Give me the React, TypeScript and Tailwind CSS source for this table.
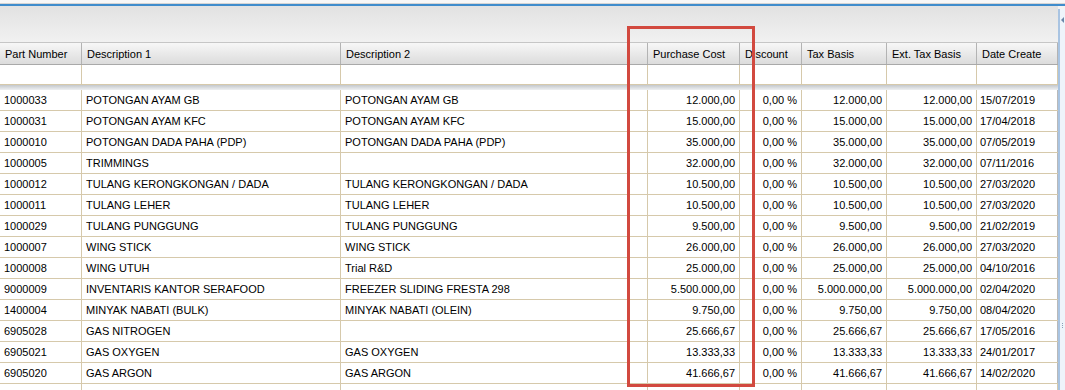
import React from 'react';

type Row = {
  part: string;
  desc1: string;
  desc2: string;
  cost: string;
  disc: string;
  tax: string;
  ext: string;
  date: string;
};

const rows: Row[] = [
  { part: '1000033', desc1: 'POTONGAN AYAM GB', desc2: 'POTONGAN AYAM GB', cost: '12.000,00', disc: '0,00 %', tax: '12.000,00', ext: '12.000,00', date: '15/07/2019' },
  { part: '1000031', desc1: 'POTONGAN AYAM KFC', desc2: 'POTONGAN AYAM KFC', cost: '15.000,00', disc: '0,00 %', tax: '15.000,00', ext: '15.000,00', date: '17/04/2018' },
  { part: '1000010', desc1: 'POTONGAN DADA PAHA (PDP)', desc2: 'POTONGAN DADA PAHA (PDP)', cost: '35.000,00', disc: '0,00 %', tax: '35.000,00', ext: '35.000,00', date: '07/05/2019' },
  { part: '1000005', desc1: 'TRIMMINGS', desc2: '', cost: '32.000,00', disc: '0,00 %', tax: '32.000,00', ext: '32.000,00', date: '07/11/2016' },
  { part: '1000012', desc1: 'TULANG KERONGKONGAN / DADA', desc2: 'TULANG KERONGKONGAN / DADA', cost: '10.500,00', disc: '0,00 %', tax: '10.500,00', ext: '10.500,00', date: '27/03/2020' },
  { part: '1000011', desc1: 'TULANG LEHER', desc2: 'TULANG LEHER', cost: '10.500,00', disc: '0,00 %', tax: '10.500,00', ext: '10.500,00', date: '27/03/2020' },
  { part: '1000029', desc1: 'TULANG PUNGGUNG', desc2: 'TULANG PUNGGUNG', cost: '9.500,00', disc: '0,00 %', tax: '9.500,00', ext: '9.500,00', date: '21/02/2019' },
  { part: '1000007', desc1: 'WING STICK', desc2: 'WING STICK', cost: '26.000,00', disc: '0,00 %', tax: '26.000,00', ext: '26.000,00', date: '27/03/2020' },
  { part: '1000008', desc1: 'WING UTUH', desc2: 'Trial R&D', cost: '25.000,00', disc: '0,00 %', tax: '25.000,00', ext: '25.000,00', date: '04/10/2016' },
  { part: '9000009', desc1: 'INVENTARIS KANTOR SERAFOOD', desc2: 'FREEZER SLIDING FRESTA 298', cost: '5.500.000,00', disc: '0,00 %', tax: '5.000.000,00', ext: '5.000.000,00', date: '02/04/2020' },
  { part: '1400004', desc1: 'MINYAK NABATI (BULK)', desc2: 'MINYAK NABATI (OLEIN)', cost: '9.750,00', disc: '0,00 %', tax: '9.750,00', ext: '9.750,00', date: '08/04/2020' },
  { part: '6905028', desc1: 'GAS NITROGEN', desc2: '', cost: '25.666,67', disc: '0,00 %', tax: '25.666,67', ext: '25.666,67', date: '17/05/2016' },
  { part: '6905021', desc1: 'GAS OXYGEN', desc2: 'GAS OXYGEN', cost: '13.333,33', disc: '0,00 %', tax: '13.333,33', ext: '13.333,33', date: '24/01/2017' },
  { part: '6905020', desc1: 'GAS ARGON', desc2: 'GAS ARGON', cost: '41.666,67', disc: '0,00 %', tax: '41.666,67', ext: '41.666,67', date: '14/02/2020' },
];

const cols = 'grid grid-cols-[82px_259px_307px_92px_62px_85px_90px_81px]';
const headers = ['Part Number', 'Description 1', 'Description 2', 'Purchase Cost', 'Discount', 'Tax Basis', 'Ext. Tax Basis', 'Date Create'];

export default function App() {
  return (
    <div className="relative w-[1065px] h-[390px] overflow-hidden bg-[#f3f3f3] text-[11px] text-black font-['Liberation_Sans',Arial,sans-serif]">
      <div className="h-[4px] bg-[#f7f7f7] border-b border-[#d4d4d4]" />
      <div className="h-[2px] bg-[#3f8ccc]" />

      <div className="flex">
        <div className="w-[1058px] shrink-0">
          {/* toolbar strip */}
          <div className="h-[37px] bg-gradient-to-b from-[#e2e2e2] to-[#f1f1f1] border-b border-[#c6c6c6]" />

          {/* header */}
          <div className={`${cols} h-[22px] bg-gradient-to-b from-[#f7f7f7] to-[#dcdcdc] border-b border-[#a9a9a9]`}>
            {headers.map((h) => (
              <div key={h} className="flex items-center pl-[5px] pt-[1px] border-r border-[#b3b3b3] whitespace-nowrap">
                {h}
              </div>
            ))}
          </div>

          {/* filter row */}
          <div className={`${cols} h-[20px] bg-white border-b border-[#d6c9ab]`}>
            {headers.map((h) => (
              <div key={h} className="border-r border-[#d6c9ab]" />
            ))}
          </div>
          <div className="h-[5px] bg-gradient-to-b from-[#c4c8cc] to-[#eef0f2]" />

          {/* data rows */}
          <div className="bg-white">
            {rows.map((r, i) => (
              <div key={i} className={`${cols} h-[21px] border-b border-[#d6c9ab] whitespace-nowrap`}>
                <div className="flex items-center pl-[4px] border-r border-[#d6c9ab]">{r.part}</div>
                <div className="flex items-center pl-[4px] border-r border-[#d6c9ab]">{r.desc1}</div>
                <div className="flex items-center pl-[4px] border-r border-[#d6c9ab]">{r.desc2}</div>
                <div className="flex items-center justify-end pr-[4px] border-r border-[#d6c9ab]">{r.cost}</div>
                <div className="flex items-center justify-end pr-[4px] border-r border-[#d6c9ab]">{r.disc}</div>
                <div className="flex items-center justify-end pr-[4px] border-r border-[#d6c9ab]">{r.tax}</div>
                <div className="flex items-center justify-end pr-[4px] border-r border-[#d6c9ab]">{r.ext}</div>
                <div className="flex items-center pl-[3px] border-r border-[#b9b9b9]">{r.date}</div>
              </div>
            ))}
            <div className={`${cols} h-[21px]`}>
              {headers.map((h) => (
                <div key={h} className="border-r border-[#d6c9ab]" />
              ))}
            </div>
          </div>
        </div>

        {/* vertical scrollbar edge */}
        <div className="mt-[3px] flex-1 h-[390px] border-l-2 border-[#a9c4e2] bg-[#eef4fa] flex flex-col items-center">
          <div className="mt-[8px] w-0 h-0 border-y-[3px] border-y-transparent border-r-[3px] border-r-[#6a86a8]" />
          <div className="mt-[300px] flex flex-col gap-[1px]">
            <div className="w-[1px] h-[1px] bg-[#8aa0b8]" />
            <div className="w-[1px] h-[1px] bg-[#8aa0b8]" />
            <div className="w-[1px] h-[1px] bg-[#8aa0b8]" />
          </div>
        </div>
      </div>

      {/* red highlight annotation */}
      <div className="absolute left-[627px] top-[26px] w-[128px] h-[361px] border-[3px] border-[#d2493f] pointer-events-none" />
    </div>
  );
}
